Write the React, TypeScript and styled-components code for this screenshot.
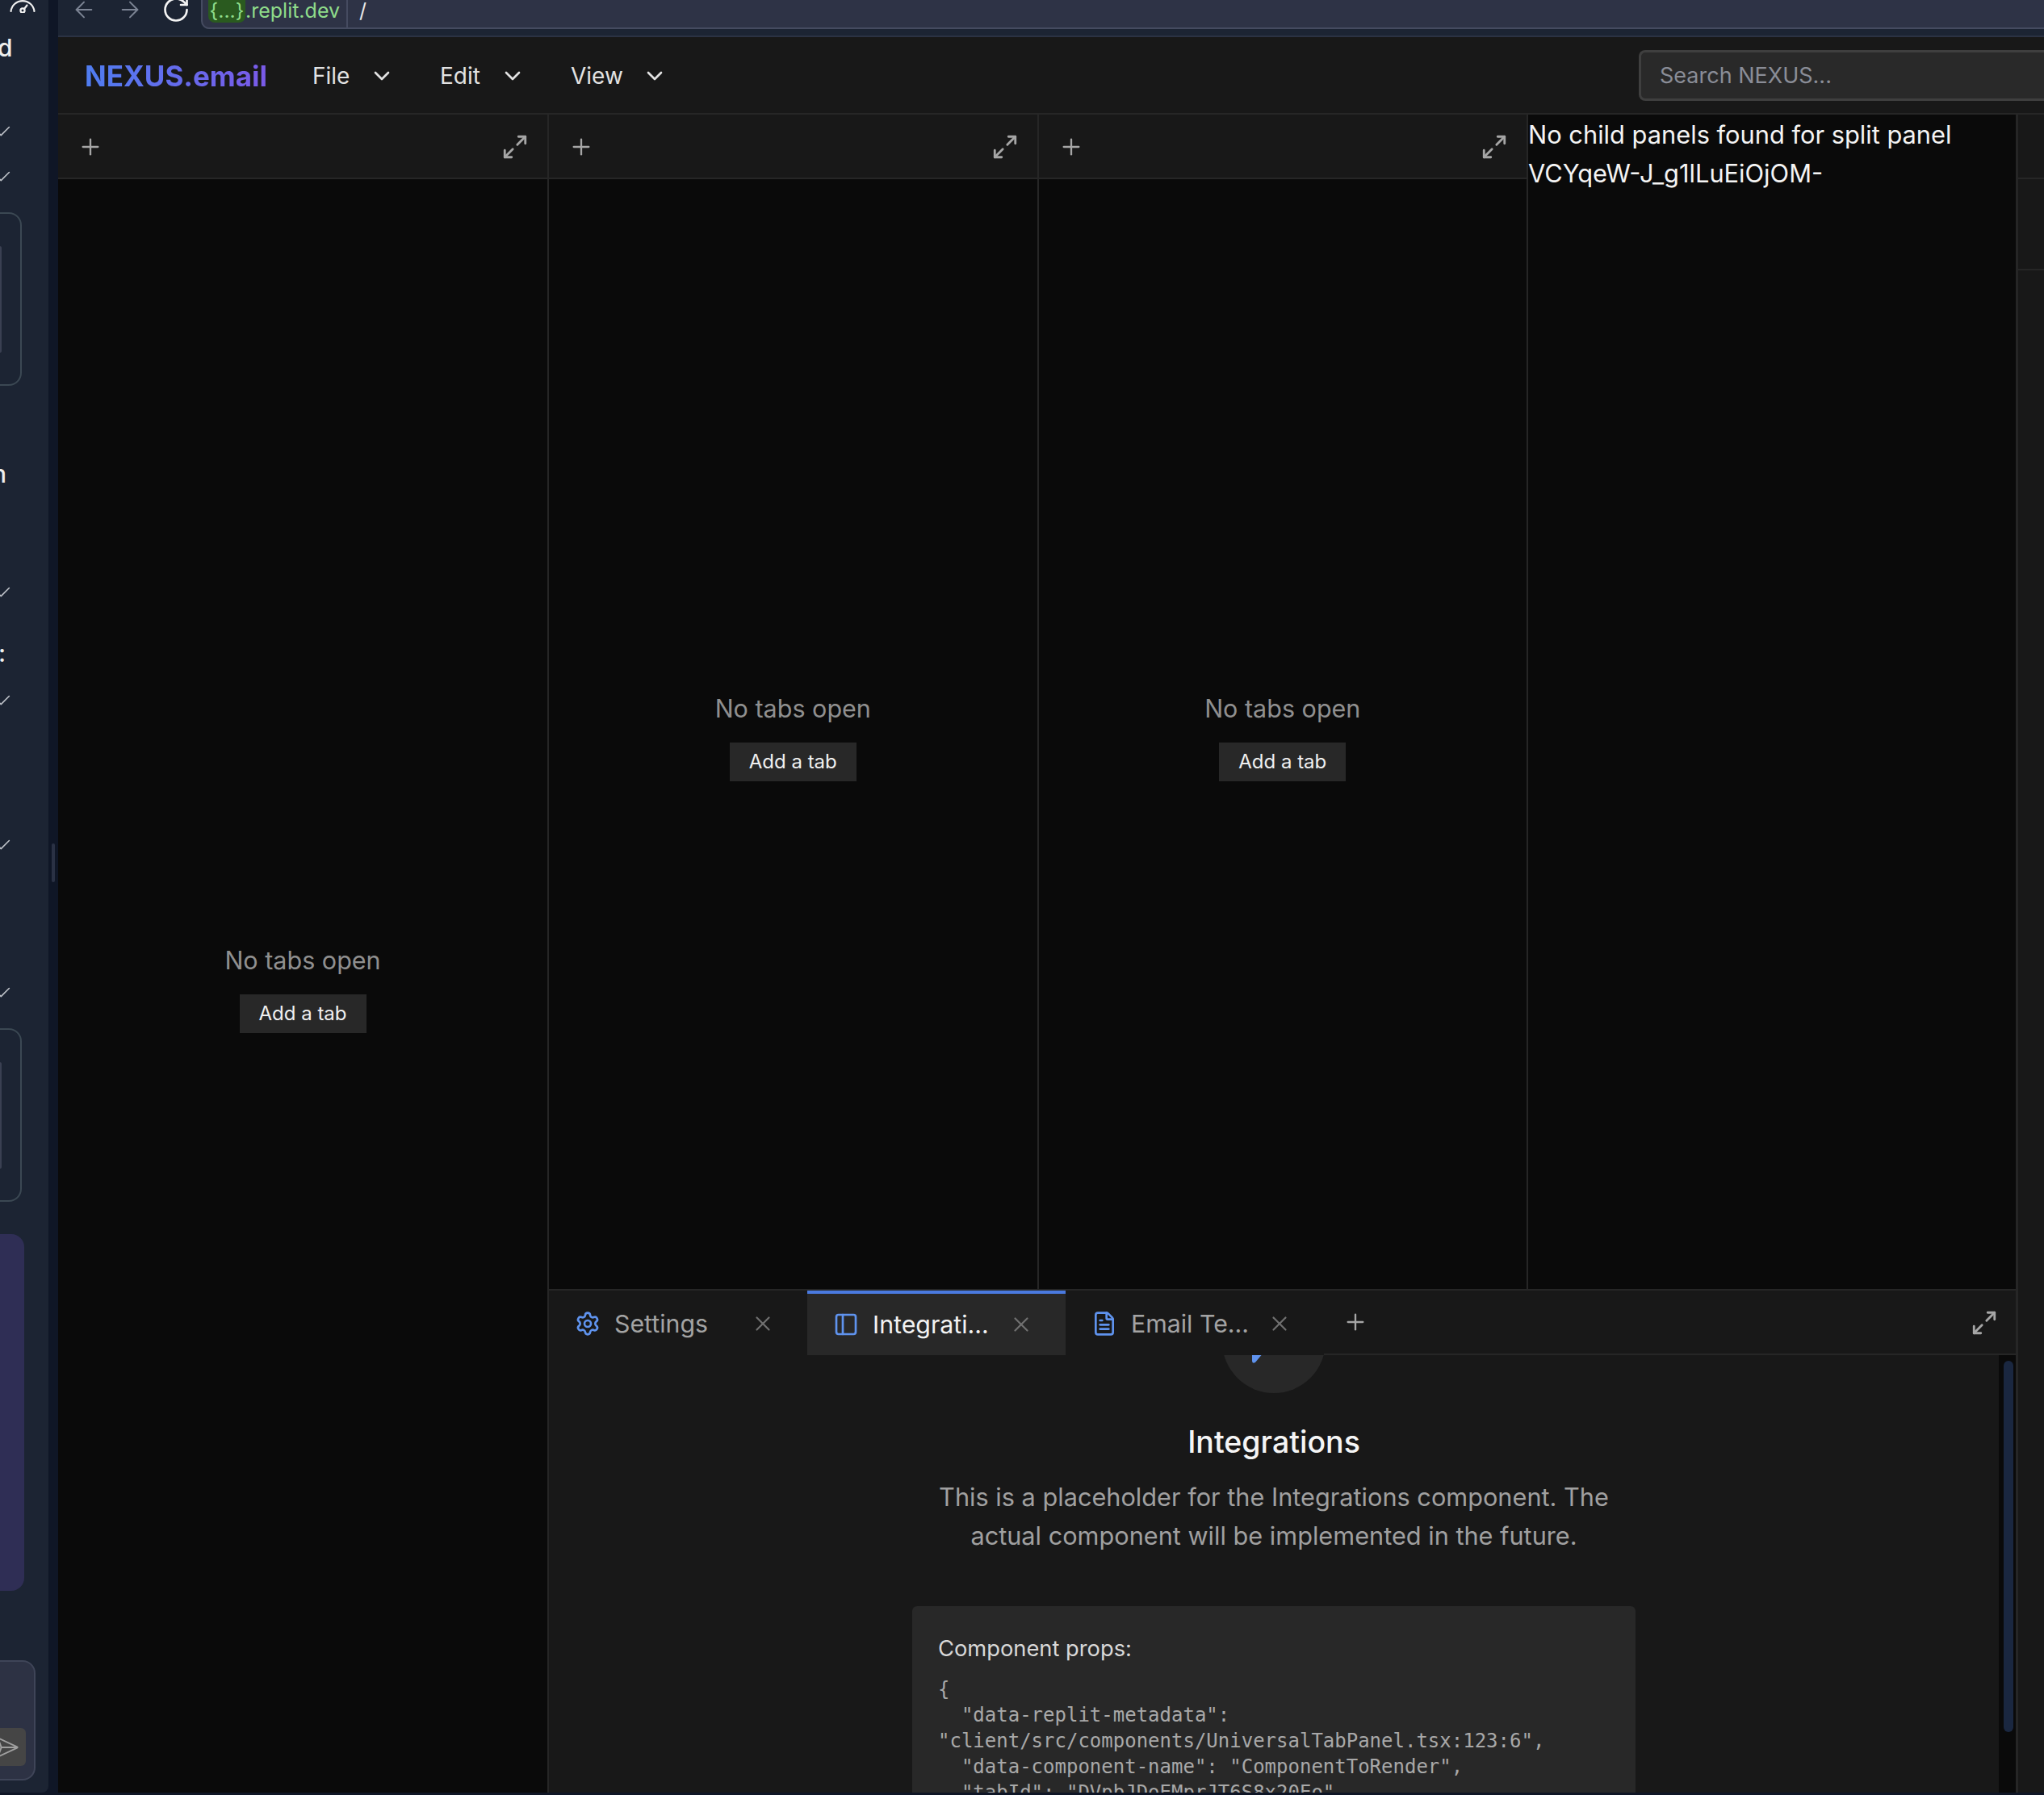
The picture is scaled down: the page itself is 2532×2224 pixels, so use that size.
import React from 'react';
import styled, { createGlobalStyle } from 'styled-components';
import { ArrowLeft, ArrowRight, RotateCw, ChevronDown, Plus, Maximize2, X, Settings, PanelLeft, FileText, Check, SendHorizontal } from 'lucide-react';

const Global = createGlobalStyle`
  html, body { margin: 0; padding: 0; background: #0f1626; }
  body { width: 2532px; height: 2224px; overflow: hidden; font-family: Inter, "Liberation Sans", sans-serif; }
  * { box-sizing: border-box; }
`;

const Page = styled.div`
  width: 2532px; height: 2224px; display: flex; overflow: hidden; background: #0f1626;
`;
const Sidebar = styled.aside`
  width: 72px; height: 2224px; flex: none; display: flex; background: #0f1626;
`;
const SidebarPane = styled.div`
  width: 60px; height: 2221px; background: #1c2433; border-bottom-right-radius: 8px;
  display: flex; flex-direction: column; overflow: hidden; color: #e6e6e6;
`;
const SideGauge = styled.div`
  height: 16px; overflow: hidden; color: #f0f0f0; flex: none;
  svg { display: block; }
`;
const SideLetter = styled.div<{ $mt: number; $ml: number }>`
  margin-top: ${p => p.$mt}px; margin-left: ${p => p.$ml}px; height: 38px; flex: none;
  line-height: 38px; font-size: 30px; color: #eee; font-weight: 500;
`;
const SideCheck = styled.div<{ $mt: number }>`
  margin-top: ${p => p.$mt}px; height: 20px; flex: none; margin-left: -7px; color: #bfc3ca;
  svg { display: block; }
`;
const OutlineBox = styled.div<{ $mt: number }>`
  margin-top: ${p => p.$mt}px; margin-left: -40px; width: 67px; height: 215px; flex: none;
  border: 2px solid #3b4853; border-radius: 0 16px 16px 0; padding: 40px 0 0 38px;
`;
const InnerBar = styled.div`
  width: 2px; height: 132px; background: #3a4052; border-radius: 0 2px 2px 0;
`;
const PurpleBox = styled.div<{ $mt: number }>`
  margin-top: ${p => p.$mt}px; margin-left: -40px; width: 70px; height: 442px; flex: none;
  background: #2f2e55; border-radius: 0 16px 16px 0;
`;
const Composer = styled.div<{ $mt: number }>`
  margin-top: ${p => p.$mt}px; margin-left: -40px; width: 84px; height: 149px; flex: none;
  background: #2d3244; border: 2px solid #3f4558; border-radius: 0 16px 16px 0;
  padding: 82px 12px 0 38px;
`;
const SendButton = styled.div`
  height: 47px; width: 32px; background: #454545; border-radius: 0 6px 6px 0;
  display: flex; align-items: center; justify-content: flex-end; color: #a0a0a0; overflow: hidden;
  svg { flex: none; margin-right: 8px; }
`;
const Gutter = styled.div`
  width: 12px; display: flex; align-items: flex-start; justify-content: center; padding-top: 1045px;
`;
const GutterHandle = styled.div`
  width: 4px; height: 48px; background: #2a3144; border-radius: 2px;
`;

const Main = styled.div`
  flex: 1; min-width: 0; height: 2224px; display: flex; flex-direction: column;
  border-bottom: 3px solid #0f1626;
`;
const BrowserBar = styled.div`
  height: 46px; flex: none; background: #1c2433; border-bottom: 2px solid #2b3243;
  display: flex; padding-bottom: 8px;
`;
const NavIcons = styled.div`
  display: flex; padding-left: 3px; width: 177px; flex: none; height: 24px;
`;
const NavIcon = styled.div<{ $c: string }>`
  width: 57px; flex: none; display: flex; align-items: center; justify-content: center;
  color: ${p => p.$c};
`;
const UrlBar = styled.div`
  flex: 1; height: 36px; background: #2e3346; border-bottom: 2px solid #454b60; border-left: 2px solid #454b60;
  border-bottom-left-radius: 10px; display: flex; align-items: flex-start; padding-left: 7px;
`;
const Host = styled.div`
  display: flex; align-items: flex-start; height: 34px; border-right: 2px solid #454b60; width: 173px;
  font-size: 25px; line-height: 26px; color: #8fdc8a;
`;
const HostBadge = styled.span`
  background: #2a5a1f; border-radius: 0 0 8px 8px; height: 28px; width: 46px;
  text-align: center; flex: none;
`;
const Path = styled.div`
  font-size: 25px; color: #e8e8e8; margin-left: 14px; height: 34px; line-height: 26px;
`;

const Header = styled.header`
  height: 96px; flex: none; background: #181818; border-bottom: 2px solid #262626;
  display: flex; align-items: center; padding: 1px 0 0 33px;
`;
const Logo = styled.div`
  font-size: 35px; font-weight: 700; width: 282px; flex: none;
  span { background: linear-gradient(90deg, #4f7df0, #7a5ae8); -webkit-background-clip: text; background-clip: text; color: transparent; }
`;
const Menu = styled.div<{ $w: number }>`
  width: ${p => p.$w}px; flex: none; display: flex; align-items: center; justify-content: space-between;
  margin-right: 56px; font-size: 28px; color: #e2e2e2;
`;
const Search = styled.div`
  margin-left: auto; width: 502px; height: 63px; background: #292929;
  border: 3px solid #3f3f3f; border-right: none; border-radius: 8px 0 0 8px;
  display: flex; align-items: center; padding-left: 23px; font-size: 27px; color: #8a8d97;
`;

const Body = styled.div`
  flex: 1; min-height: 0; display: flex;
`;
const LeftPanel = styled.section`
  width: 608px; flex: none; display: flex; flex-direction: column; border-right: 2px solid #262626;
`;
const Center = styled.div`
  width: 1820px; flex: none; display: flex; flex-direction: column; border-right: 3px solid #262626;
`;
const UpperRow = styled.div`
  height: 1455px; flex: none; display: flex;
`;
const Pane = styled.section`
  width: 606.5px; flex: none; display: flex; flex-direction: column; border-right: 2px solid #262626;
`;
const NoticePane = styled.section`
  flex: 1; min-width: 0; background: #0a0a0a; color: #f4f4f4; font-size: 30.8px; line-height: 48px; padding: 1px 0 0 0;
`;
const StripBar = styled.div`
  width: 32px; flex: none; background: #181818; display: flex; flex-direction: column;
`;
const StripCell = styled.div<{ $h: number }>`
  height: ${p => p.$h}px; border-bottom: 2px solid #262626;
`;
const EmptyTabBar = styled.div`
  height: 80px; flex: none; background: #181818; border-bottom: 2px solid #262626;
  display: flex; align-items: center; justify-content: space-between; padding: 2px 23px 0 24px; color: #a6a6a6;
`;
const EmptyBody = styled.div`
  flex: 1; min-height: 0; background: #0a0a0a; display: flex; flex-direction: column; align-items: center; justify-content: center;
  padding-top: 4px;
`;
const EmptyTitle = styled.div`
  font-size: 30.5px; color: #8f8f8f; line-height: 44px; margin-bottom: 20px;
`;
const AddButton = styled.div`
  width: 157px; height: 48px; background: #282828; color: #f0f0f0; font-size: 24px; line-height: 48px; text-align: center;
`;

const BottomPanel = styled.section`
  flex: 1; min-height: 0; display: flex; flex-direction: column; background: #181818; border-top: 2px solid #262626;
`;
const TabBar = styled.div`
  height: 80px; flex: none; display: flex; align-items: stretch; border-bottom: 2px solid #262626; background: #181818;
`;
const Tab = styled.div<{ $active?: boolean }>`
  width: 320px; flex: none; display: flex; align-items: center; padding-left: 32px; padding-right: 40px;
  padding-bottom: ${p => p.$active ? 0 : 3}px;
  background: ${p => p.$active ? '#282828' : '#181818'};
  border-top: 4px solid ${p => p.$active ? '#4a7ae0' : 'transparent'};
  margin-bottom: -2px;
  color: ${p => p.$active ? '#f2f2f2' : '#a3a3a3'}; font-size: 30.3px;
`;
const TabIcon = styled.div`
  color: #5f93ee; width: 32px; flex: none; display: flex; margin-right: 17px;
`;
const TabLabel = styled.div`
  flex: 1; min-width: 0; white-space: nowrap; overflow: hidden;
`;
const TabClose = styled.div`
  color: #707070; display: flex; flex: none;
`;
const TabAdd = styled.div`
  color: #a6a6a6; display: flex; align-items: center; margin-left: 23px;
`;
const TabExpand = styled.div`
  margin-left: auto; color: #a6a6a6; display: flex; align-items: center; padding: 2px 22px 0 0;
`;
const ScrollArea = styled.div`
  flex: 1; min-height: 0; display: flex; overflow: hidden;
`;
const Content = styled.div`
  flex: 1; min-width: 0; display: flex; flex-direction: column; align-items: center;
`;
const IconCircle = styled.div`
  width: 128px; height: 128px; border-radius: 50%; background: #282828; margin-top: -81px; flex: none;
  display: flex; align-items: center; justify-content: center;
`;
const Heading = styled.h2`
  margin: 33px 0 0; font-size: 37.5px; line-height: 56px; font-weight: 500; color: #f5f5f5;
`;
const Description = styled.p`
  margin: 16px 0 0; width: 896px; text-align: center; font-size: 30.7px; line-height: 48px; color: #a0a0a0;
`;
const Card = styled.div`
  margin-top: 63px; width: 896px; flex: 1; background: #282828; border-radius: 6px 6px 0 0; padding: 32px; overflow: hidden;
`;
const CardLabel = styled.div`
  font-size: 27.3px; line-height: 42px; color: #d8d8d8;
`;
const Props = styled.pre`
  margin: 13px 0 0; font-family: "DejaVu Sans Mono", "Liberation Mono", monospace; font-size: 24px; line-height: 32px; color: #a8a8a8;
`;
const ScrollTrack = styled.div`
  width: 21px; flex: none; background: #0a0a0a; padding: 7px 3px 0 6px;
`;
const ScrollThumb = styled.div`
  height: 460px; background: #1a2740; border-radius: 6px;
`;

const EmptyPanelBody = () => (
  <EmptyBody>
    <EmptyTitle>No tabs open</EmptyTitle>
    <AddButton>Add a tab</AddButton>
  </EmptyBody>
);
const EmptyBar = () => (
  <EmptyTabBar>
    <Plus size={32} strokeWidth={1.75} />
    <Maximize2 size={34} strokeWidth={2} />
  </EmptyTabBar>
);
const CheckMark = () => <Check size={22} strokeWidth={1.75} />;
const GaugeGlyph = () => (
  <svg width="56" height="18" viewBox="0 0 56 18" fill="none" stroke="currentColor" strokeWidth="2.2" strokeLinecap="round">
    <path d="M13.5 14 A14.6 14.6 0 0 1 42.5 14" />
    <circle cx="28" cy="13" r="2.6" />
    <path d="M30 11 L33.5 6.5" />
  </svg>
);

export default function App() {
  return (
    <Page>
      <Global />
      <Sidebar>
        <SidebarPane>
          <SideGauge><GaugeGlyph /></SideGauge>
          <SideLetter $mt={24} $ml={-3}>d</SideLetter>
          <SideCheck $mt={74}><CheckMark /></SideCheck>
          <SideCheck $mt={36}><CheckMark /></SideCheck>
          <OutlineBox $mt={35}><InnerBar /></OutlineBox>
          <SideLetter $mt={90} $ml={-10}>n</SideLetter>
          <SideCheck $mt={117}><CheckMark /></SideCheck>
          <SideLetter $mt={47} $ml={-2}>:</SideLetter>
          <SideCheck $mt={29}><CheckMark /></SideCheck>
          <SideCheck $mt={159}><CheckMark /></SideCheck>
          <SideCheck $mt={163}><CheckMark /></SideCheck>
          <OutlineBox $mt={35}><InnerBar /></OutlineBox>
          <PurpleBox $mt={40} />
          <Composer $mt={86}>
            <SendButton><SendHorizontal size={30} strokeWidth={1.5} /></SendButton>
          </Composer>
        </SidebarPane>
        <Gutter><GutterHandle /></Gutter>
      </Sidebar>
      <Main>
        <BrowserBar>
          <NavIcons>
            <NavIcon $c="#7c8494"><ArrowLeft size={32} strokeWidth={1.5} /></NavIcon>
            <NavIcon $c="#7c8494"><ArrowRight size={32} strokeWidth={1.5} /></NavIcon>
            <NavIcon $c="#f4f4f4"><RotateCw size={36} strokeWidth={1.75} /></NavIcon>
          </NavIcons>
          <UrlBar>
            <Host><HostBadge>{'{...}'}</HostBadge>.replit.dev</Host>
            <Path>/</Path>
          </UrlBar>
        </BrowserBar>
        <Header>
          <Logo><span>NEXUS.email</span></Logo>
          <Menu $w={102}>File <ChevronDown size={32} strokeWidth={2} /></Menu>
          <Menu $w={106}>Edit <ChevronDown size={32} strokeWidth={2} /></Menu>
          <Menu $w={120}>View <ChevronDown size={32} strokeWidth={2} /></Menu>
          <Search>Search NEXUS...</Search>
        </Header>
        <Body>
          <LeftPanel>
            <EmptyBar />
            <EmptyPanelBody />
          </LeftPanel>
          <Center>
            <UpperRow>
              <Pane><EmptyBar /><EmptyPanelBody /></Pane>
              <Pane><EmptyBar /><EmptyPanelBody /></Pane>
              <NoticePane>No child panels found for split panel VCYqeW-J_g1lLuEiOjOM-</NoticePane>
            </UpperRow>
            <BottomPanel>
              <TabBar>
                <Tab>
                  <TabIcon><Settings size={32} strokeWidth={2} /></TabIcon>
                  <TabLabel>Settings</TabLabel>
                  <TabClose><X size={30} strokeWidth={1.75} /></TabClose>
                </Tab>
                <Tab $active>
                  <TabIcon><PanelLeft size={32} strokeWidth={2} /></TabIcon>
                  <TabLabel>Integrati...</TabLabel>
                  <TabClose><X size={30} strokeWidth={1.75} /></TabClose>
                </Tab>
                <Tab>
                  <TabIcon><FileText size={32} strokeWidth={2} /></TabIcon>
                  <TabLabel>Email Te...</TabLabel>
                  <TabClose><X size={30} strokeWidth={1.75} /></TabClose>
                </Tab>
                <TabAdd><Plus size={32} strokeWidth={1.75} /></TabAdd>
                <TabExpand><Maximize2 size={34} strokeWidth={2} /></TabExpand>
              </TabBar>
              <ScrollArea>
                <Content>
                  <IconCircle>
                    <svg width="64" height="64" viewBox="0 0 64 64" fill="#5f93ee">
                      <path d="M5 40 H24 L9 58 Q5 60 5 56 Z" />
                    </svg>
                  </IconCircle>
                  <Heading>Integrations</Heading>
                  <Description>This is a placeholder for the Integrations component. The actual component will be implemented in the future.</Description>
                  <Card>
                    <CardLabel>Component props:</CardLabel>
                    <Props>{`{
  "data-replit-metadata":
"client/src/components/UniversalTabPanel.tsx:123:6",
  "data-component-name": "ComponentToRender",
  "tabId": "DVpbJDoEMprJT6S8x20Eo"`}</Props>
                  </Card>
                </Content>
                <ScrollTrack><ScrollThumb /></ScrollTrack>
              </ScrollArea>
            </BottomPanel>
          </Center>
          <StripBar>
            <StripCell $h={80} />
            <StripCell $h={113} />
          </StripBar>
        </Body>
      </Main>
    </Page>
  );
}
